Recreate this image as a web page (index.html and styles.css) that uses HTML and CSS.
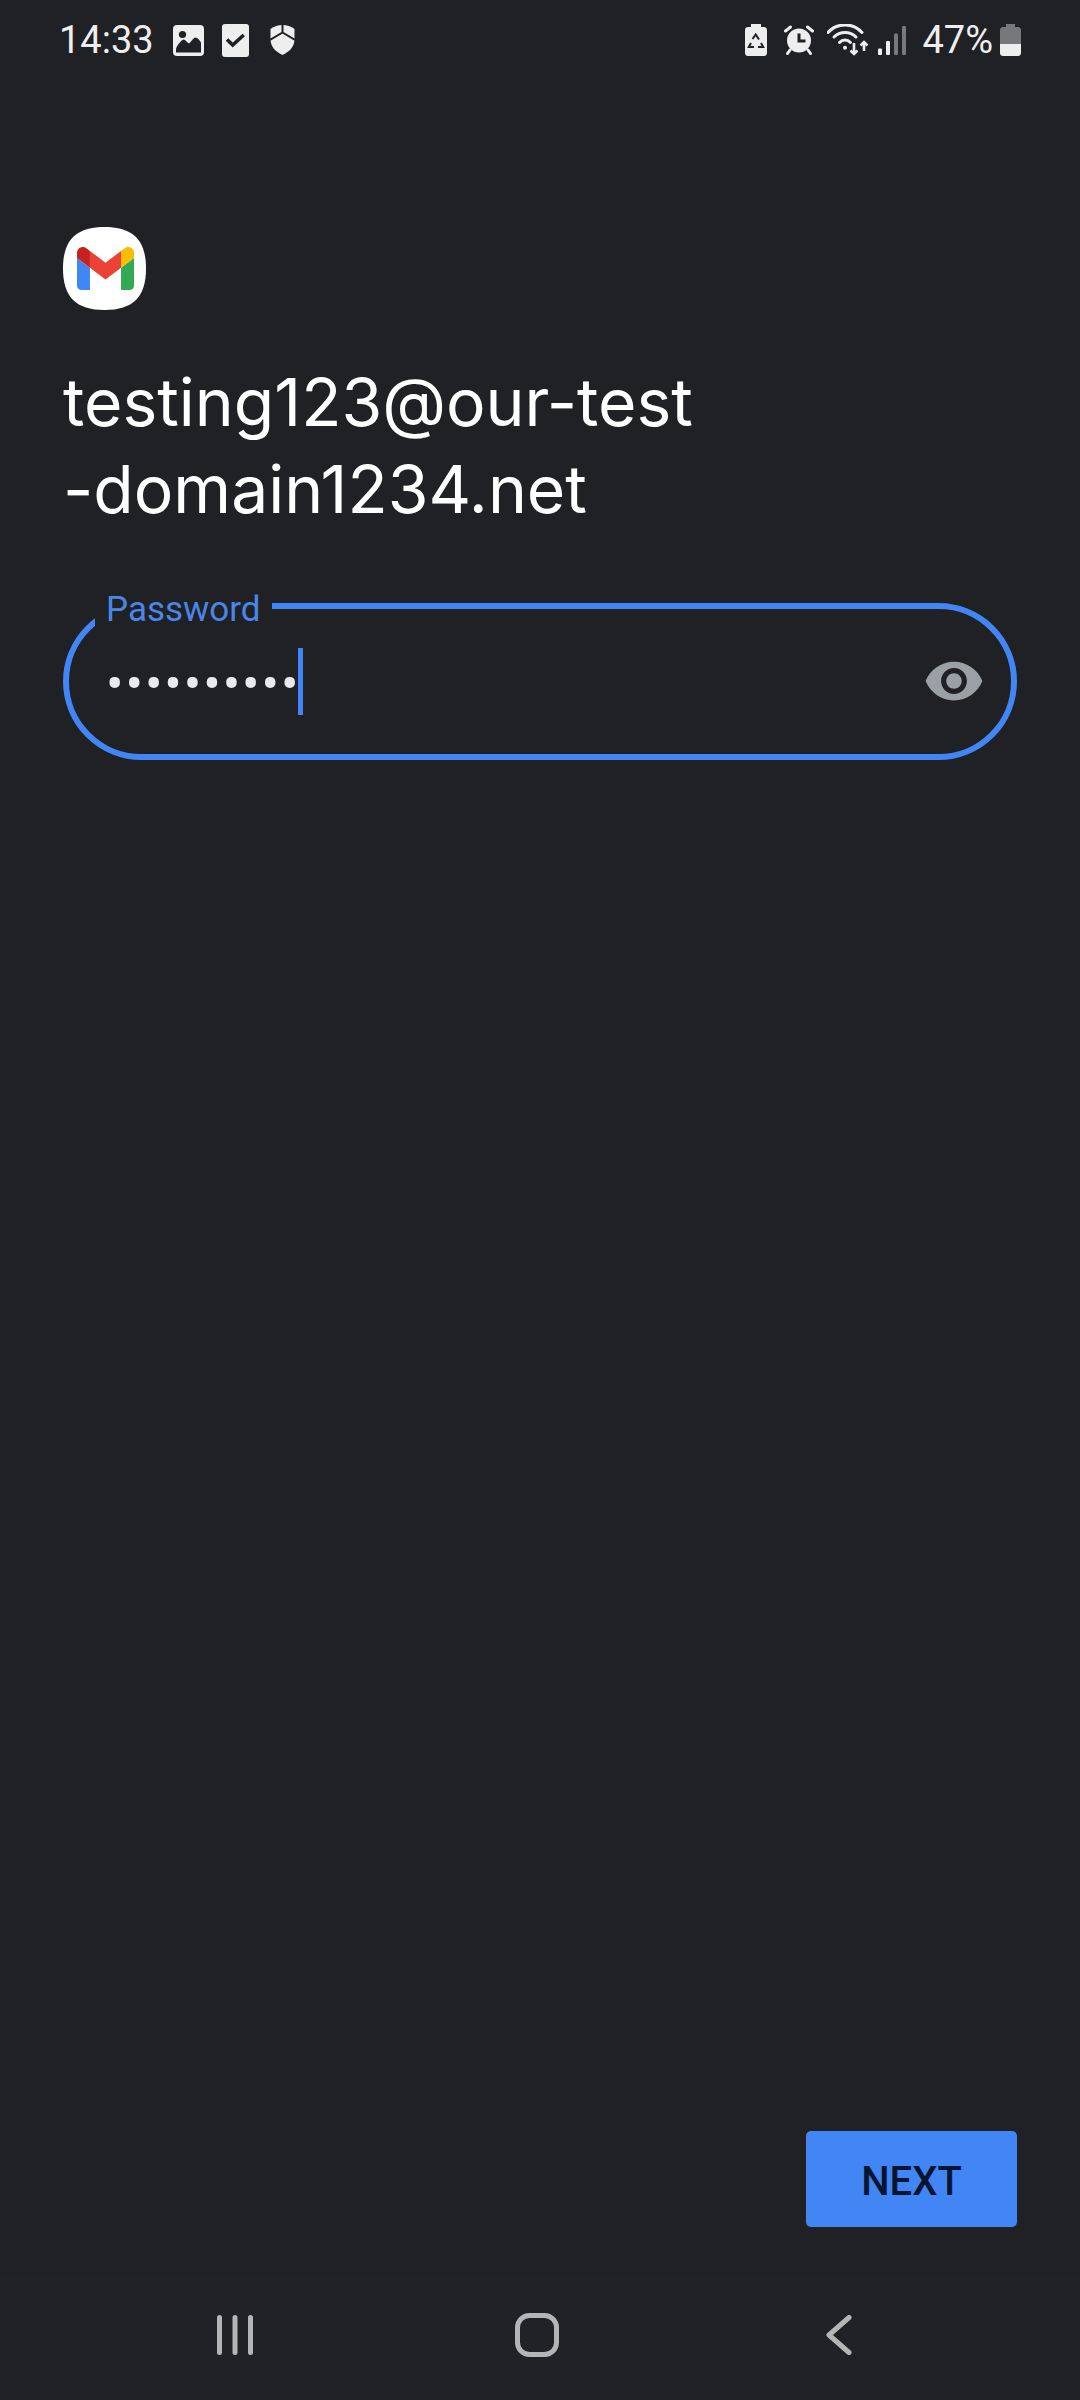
FILE: index.html
```html
<!DOCTYPE html>
<html lang="en">
<head>
    <meta charset="UTF-8">
    <meta name="viewport" content="width=device-width, initial-scale=1.0">
    <title>Gmail - Password</title>
    <link rel="stylesheet" href="styles.css">
</head>
<body>
    <div class="screen">
        <div class="status-bar">
            <div class="status-left">
                <span class="status-time">14:33</span>
                <svg class="icon-image" width="31" height="31" viewBox="0 0 31 31">
                    <rect width="31" height="31" rx="4" fill="#eeeeee"/>
                    <circle cx="9.5" cy="9.5" r="3.6" fill="#202124"/>
                    <path d="M3 27.5V24C4 20 8 15.5 10.500 14.500C12.500 14.500 14 17.500 16 18.500C18 17 20.500 12.500 22.500 12.500C24.500 12.500 26.500 15 28 17.500V27.500Z" fill="#202124"/>
                </svg>
                <svg class="icon-check" width="27" height="33" viewBox="0 0 27 33">
                    <rect width="27" height="33" rx="3" fill="#eeeeee"/>
                    <path d="M5 15.500L10.700 21L21.700 11" fill="none" stroke="#202124" stroke-width="3.600"/>
                </svg>
                <svg class="icon-shield" width="25" height="30" viewBox="0 0 25 30">
                    <path d="M12.500 0C8 0 4 1.500 0.500 4V14C0.500 22 6 27 12.500 30C19 27 24.500 22 24.500 14V4C21 1.500 17 0 12.500 0Z" fill="#eeeeee"/>
                    <path d="M12.500 0V7.500L0 15M12.500 7.500L25 15" fill="none" stroke="#202124" stroke-width="2"/>
                </svg>
            </div>
            <div class="status-right">
                <svg class="icon-saver" width="22" height="32" viewBox="0 0 22 32">
                    <path d="M6 0H16V3H19C20.700 3 22 4.300 22 6V29C22 30.700 20.700 32 19 32H3C1.300 32 0 30.700 0 29V6C0 4.300 1.300 3 3 3H6Z" fill="#eeeeee"/>
                    <path d="M7.500 15L10.700 10.500L14 15.500M6 19L3.800 23H9M13 23H18.200L16 19" fill="none" stroke="#202124" stroke-width="2"/>
                </svg>
                <svg class="icon-alarm" width="30" height="30" viewBox="0 0 30 30">
                    <circle cx="15" cy="15.500" r="12" fill="#eeeeee"/>
                    <path d="M1.500 6L6.500 2M23.500 2L28.500 6M6 25L3.500 28.500M24 25L26.500 28.500" fill="none" stroke="#eeeeee" stroke-width="3" stroke-linecap="round"/>
                    <path d="M15 8.500V16H21.500" fill="none" stroke="#202124" stroke-width="3"/>
                </svg>
                <svg class="icon-wifi" width="44" height="32" viewBox="0 0 44 32">
                    <g fill="none" stroke="#eeeeee" stroke-width="3" stroke-linecap="round">
                        <path d="M1 8.400A23 23 0 0 1 35 8.400"/>
                        <path d="M7 13A15.400 15.400 0 0 1 29 13"/>
                        <path d="M12.500 18.500A7.500 7.500 0 0 1 23.500 18.500"/>
                    </g>
                    <circle cx="18" cy="23.700" r="2" fill="#eeeeee"/>
                    <path d="M27 19V30M23.500 26.500L27 30L30.500 26.500M37 18V27M33.500 21.500L37 18L40.500 21.500" fill="none" stroke="#eeeeee" stroke-width="2.600"/>
                </svg>
                <svg class="icon-signal" width="28" height="29" viewBox="0 0 28 29">
                    <rect x="0" y="22.500" width="4" height="6.500" rx="1" fill="#eeeeee"/>
                    <rect x="8" y="15" width="4" height="14" rx="1" fill="#eeeeee"/>
                    <rect x="16" y="7.500" width="4" height="21.500" rx="1" fill="#77787a"/>
                    <rect x="24" y="0" width="4" height="29" rx="1" fill="#77787a"/>
                </svg>
                <span class="status-battery-text">47%</span>
                <svg class="icon-battery" width="21" height="32" viewBox="0 0 21 32">
                    <path d="M6 0H15V3H18C19.700 3 21 4.300 21 6V20H0V6C0 4.300 1.300 3 3 3H6Z" fill="#77787a"/>
                    <path d="M0 20H21V29C21 30.700 19.700 32 18 32H3C1.300 32 0 30.700 0 29Z" fill="#eeeeee"/>
                </svg>
            </div>
        </div>

        <div class="content">
            <svg class="logo" width="83" height="83" viewBox="0 0 83 83">
                <path d="M41.500 0C70 0 83 13 83 41.500S70 83 41.500 83S0 70 0 41.500S13 0 41.500 0Z" fill="#ffffff"/>
                <svg x="14" y="20" width="57" height="43" viewBox="52 42 88 66" preserveAspectRatio="none">
                    <path fill="#4285f4" d="M58 108h14V74L52 59v43c0 3.320 2.690 6 6 6"/>
                    <path fill="#34a853" d="M120 108h14c3.320 0 6-2.690 6-6V59l-20 15"/>
                    <path fill="#fbbc04" d="M120 48v26l20-15v-8c0-7.420-8.470-11.650-14.400-7.200"/>
                    <path fill="#ea4335" d="M72 74V48l24 18 24-18v26L96 92"/>
                    <path fill="#c5221f" d="M52 51v8l20 15V48l-5.600-4.200c-5.940-4.450-14.400-.22-14.400 7.200"/>
                </svg>
            </svg>

            <h1 class="account-title">testing123@our-test<br>-domain1234.net</h1>

            <fieldset class="password-field">
                <legend class="password-label">Password</legend>
                <div class="password-row">
                    <span class="password-dots">••••••••••</span>
                    <span class="caret"></span>
                    <svg class="eye" width="62" height="62" viewBox="0 0 24 24">
                        <path fill="#9aa0a6" d="M12 4.500C7 4.500 2.730 7.610 1 12c1.730 4.390 6 7.500 11 7.500s9.270-3.110 11-7.500c-1.730-4.390-6-7.500-11-7.500zM12 17c-2.760 0-5-2.240-5-5s2.240-5 5-5 5 2.240 5 5-2.240 5-5 5zm0-8c-1.660 0-3 1.340-3 3s1.340 3 3 3 3-1.340 3-3-1.340-3-3-3z"/>
                    </svg>
                </div>
            </fieldset>

            <div class="actions">
                <button type="button" class="next-btn">NEXT</button>
            </div>
        </div>

        <div class="nav-bar">
            <div class="nav-item">
                <svg width="36" height="40" viewBox="0 0 36 40">
                    <path d="M2.500 2.500V37.500M18 2.500V37.500M33.500 2.500V37.500" fill="none" stroke="#b5b5b5" stroke-width="5" stroke-linecap="round"/>
                </svg>
            </div>
            <div class="nav-item">
                <svg width="44" height="44" viewBox="0 0 44 44">
                    <rect x="2.500" y="2.500" width="39" height="39" rx="12" fill="none" stroke="#b5b5b5" stroke-width="5"/>
                </svg>
            </div>
            <div class="nav-item">
                <svg width="26" height="40" viewBox="0 0 26 40">
                    <path d="M23 2.500L3 20L23 37.500" fill="none" stroke="#b5b5b5" stroke-width="5" stroke-linecap="round" stroke-linejoin="round"/>
                </svg>
            </div>
        </div>
    </div>
</body>
</html>
```

FILE: styles.css
```css
* {
    margin: 0;
    padding: 0;
    box-sizing: border-box;
}

body {
    font-family: Roboto, "Noto Sans", sans-serif;
    background: #202124;
}

.screen {
    width: 1080px;
    height: 2400px;
    display: flex;
    flex-direction: column;
}

.status-bar {
    height: 80px;
    padding: 0 59px 0 59px;
    display: flex;
    justify-content: space-between;
    align-items: center;
    color: #eeeeee;
}

.status-left,
.status-right {
    display: flex;
    align-items: center;
}

.status-time {
    font-size: 38px;
    margin-right: 19px;
}

.icon-check {
    margin-left: 18px;
}

.icon-shield {
    margin-left: 21px;
}

.icon-alarm {
    margin-left: 17px;
}

.icon-wifi {
    margin-left: 13px;
}

.icon-signal {
    margin-left: 7px;
}

.status-battery-text {
    font-size: 38px;
    margin-left: 16px;
    margin-right: 7px;
}

.content {
    flex: 1;
    padding: 147px 63px 0;
    display: flex;
    flex-direction: column;
}

.logo {
    display: block;
}

.account-title {
    font-family: Inter, Roboto, sans-serif;
    font-size: 66px;
    font-weight: 400;
    line-height: 87px;
    color: #ffffff;
    margin-top: 49px;
}

.password-field {
    border: 6px solid #4285f4;
    border-radius: 79px;
    margin-top: 51px;
}

.password-label {
    margin-left: 26px;
    padding: 8px 11px 0 11px;
    font-size: 35px;
    line-height: 36px;
    color: #4a86e8;
}

/* the legend takes room in the flow, so pull the row up behind it */
.password-row {
    height: 146px;
    margin-top: -20px;
    padding: 0 26px 0 37px;
    display: flex;
    align-items: center;
}

.password-dots {
    margin-top: 6px;
    font-size: 52px;
    letter-spacing: 1.9px;
    color: #e8eaed;
}

.caret {
    width: 5px;
    height: 67px;
    margin-left: -2px;
    background: #4285f4;
}

.eye {
    margin-left: auto;
}

.actions {
    margin-top: auto;
    margin-bottom: 50px;
    display: flex;
    justify-content: flex-end;
}

.next-btn {
    width: 211px;
    height: 96px;
    padding-top: 4px;
    border: none;
    border-radius: 5px;
    background: #4285f4;
    color: #081530;
    font-family: Roboto, sans-serif;
    font-size: 40px;
    font-weight: 500;
}

.nav-bar {
    height: 123px;
    padding: 0 6px 8px 0;
    background: #212226;
    display: flex;
    justify-content: center;
    align-items: center;
}

.nav-item {
    width: 302px;
    display: flex;
    justify-content: center;
}
```
